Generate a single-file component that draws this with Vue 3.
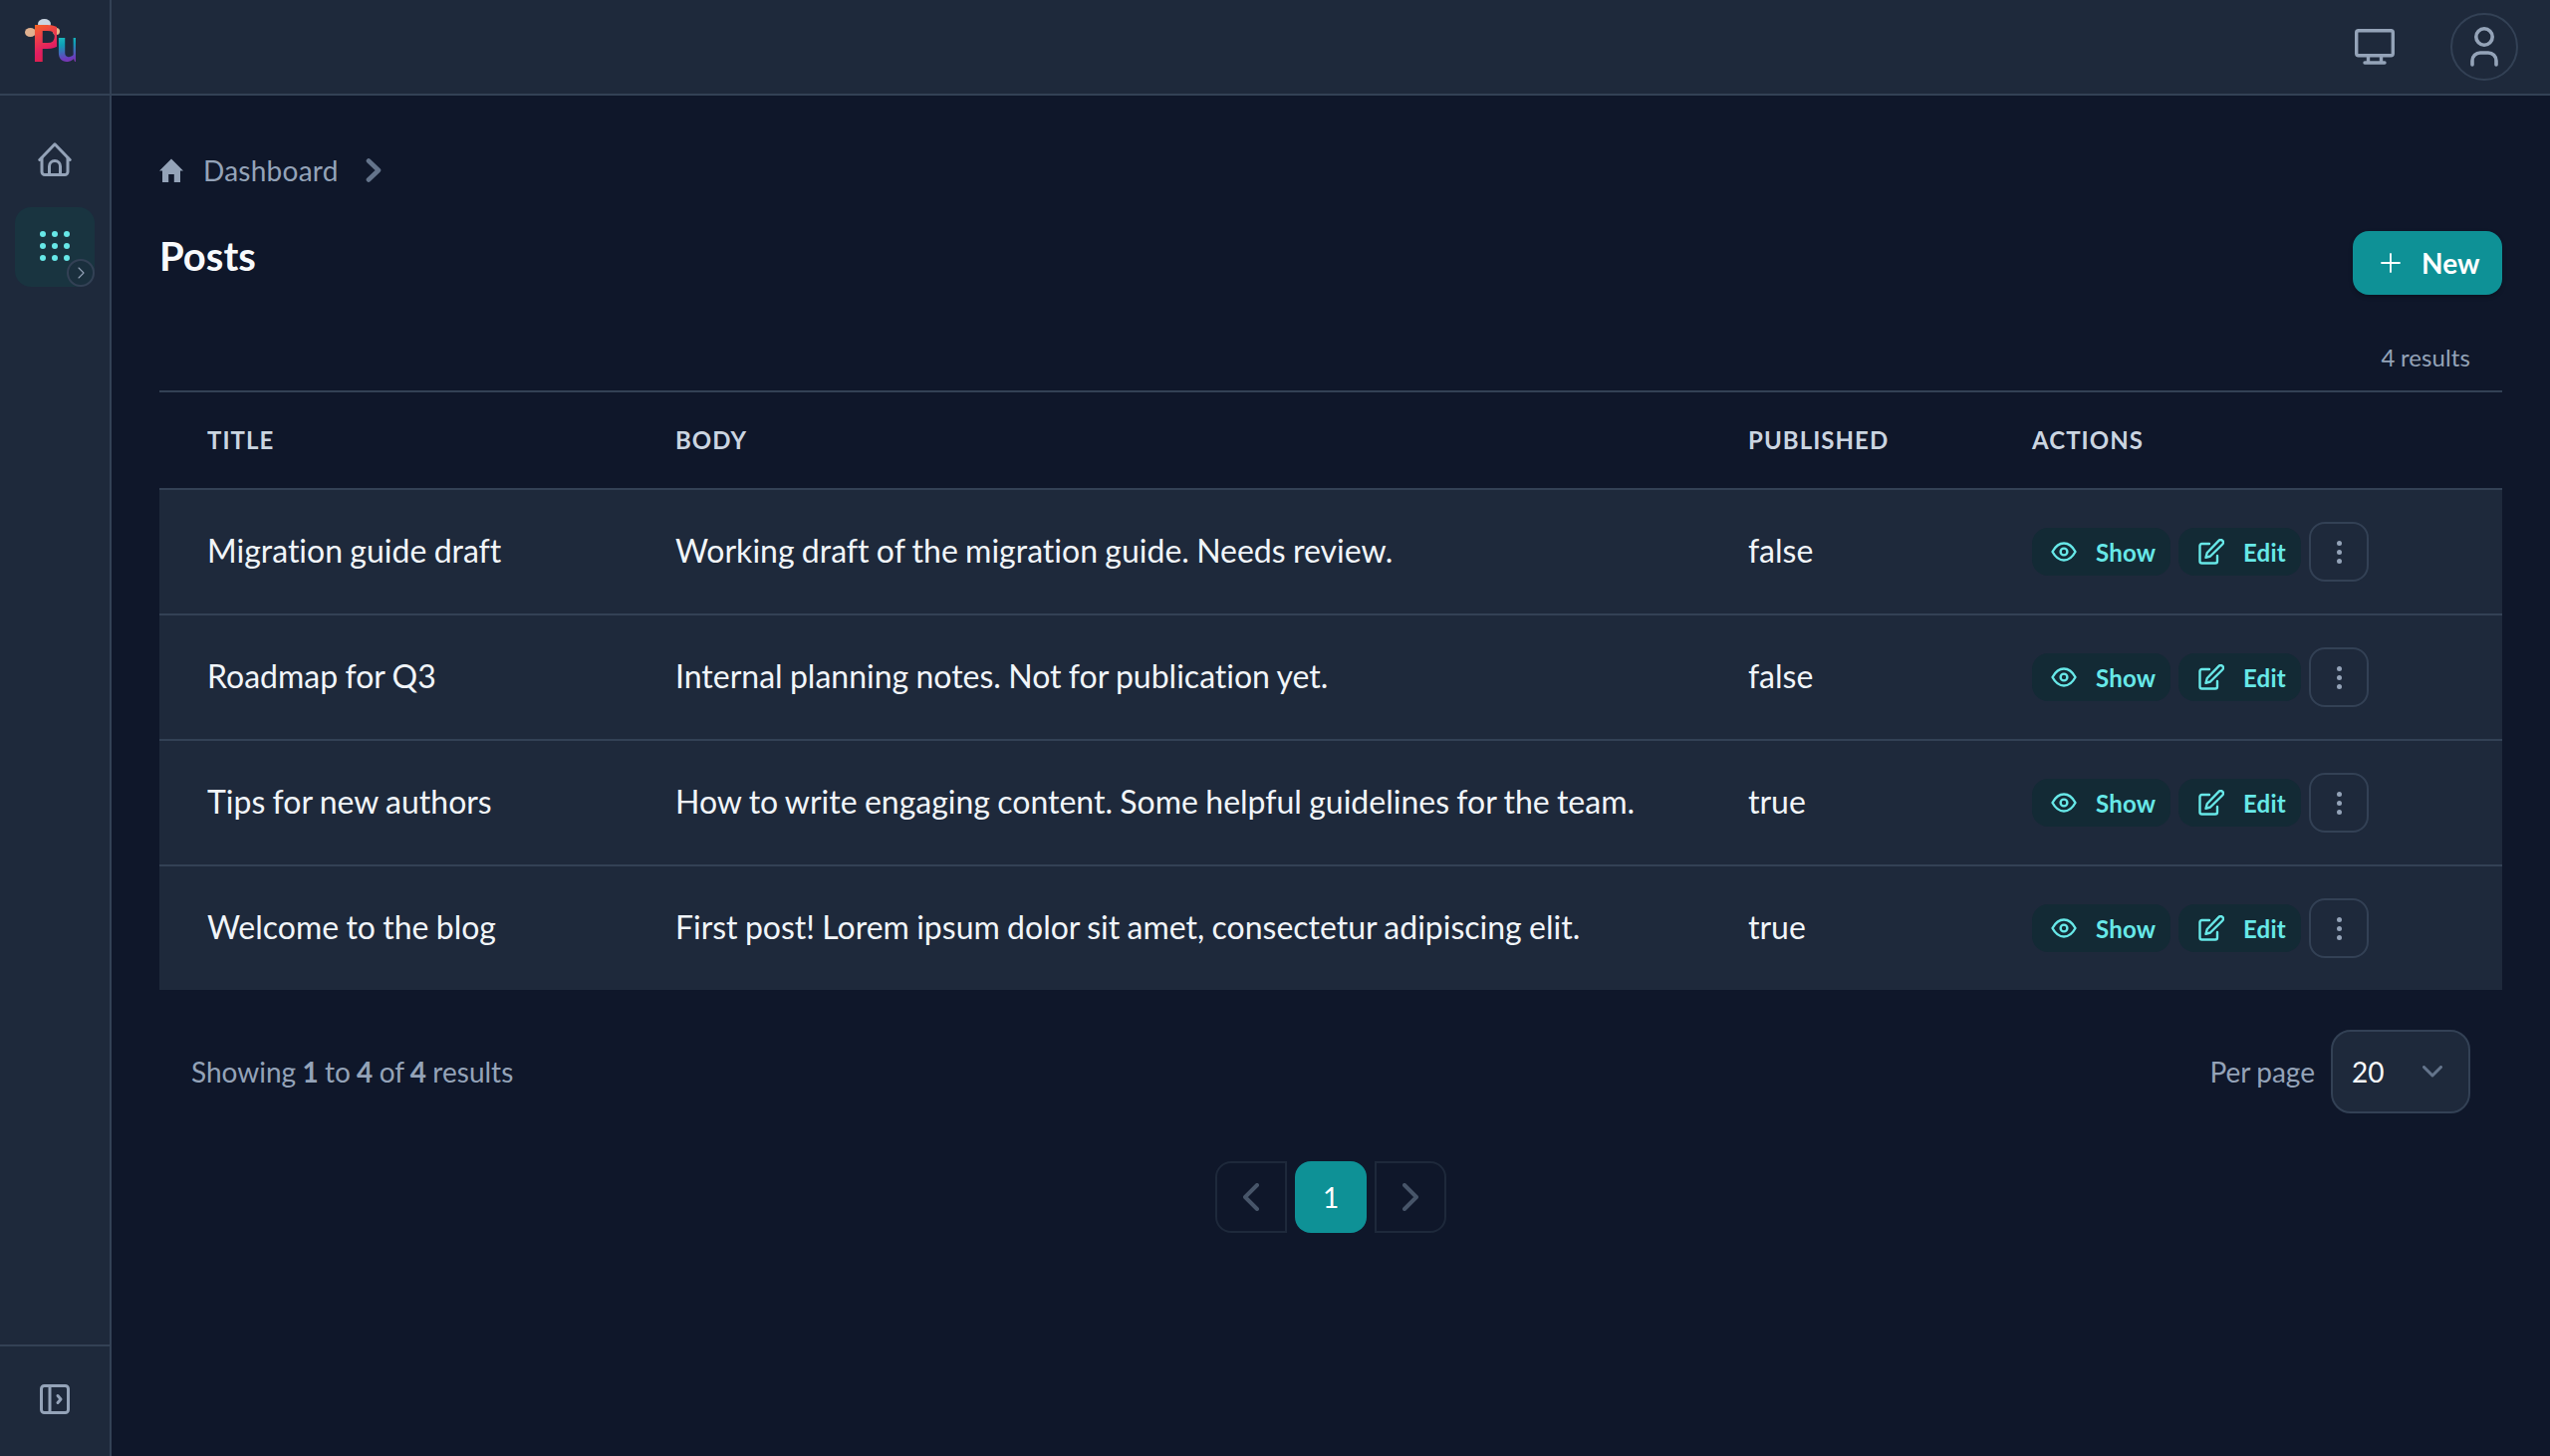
<script setup>
const rows = [
  { title: 'Migration guide draft', body: 'Working draft of the migration guide. Needs review.', published: 'false' },
  { title: 'Roadmap for Q3', body: 'Internal planning notes. Not for publication yet.', published: 'false' },
  { title: 'Tips for new authors', body: 'How to write engaging content. Some helpful guidelines for the team.', published: 'true' },
  { title: 'Welcome to the blog', body: 'First post! Lorem ipsum dolor sit amet, consectetur adipiscing elit.', published: 'true' },
]
const dots = Array.from({ length: 9 }, (_, i) => i)
</script>

<template>
  <div class="app">
    <aside class="sidebar">
      <div class="logo-cell">
        <div class="logo">
          <span class="logo-splash s1"></span>
          <span class="logo-splash s2"></span>
          <span class="logo-splash s3"></span>
          <span class="logo-p">P</span><span class="logo-u">u</span>
        </div>
      </div>
      <nav class="nav">
        <svg class="nav-home" viewBox="0 0 34 34" fill="none" stroke="#94a3b8" stroke-width="3" stroke-linecap="round" stroke-linejoin="round">
          <path d="M1.8 17.5 L17 1.8 L32.2 17.5" />
          <path d="M4 15.5 V29.5 a3 3 0 0 0 3 3 H27 a3 3 0 0 0 3 -3 V15.5" />
          <path d="M11.5 32 V24 a5.5 5.5 0 0 1 11 0 V32" />
        </svg>
        <div class="nav-active">
          <div class="dot-grid">
            <span v-for="d in dots" :key="d" class="dot"></span>
          </div>
          <span class="nav-badge">
            <svg viewBox="0 0 12 12" fill="none" stroke="#94a3b8" stroke-width="1.1" stroke-linecap="round" stroke-linejoin="round"><path d="M4 1 L9 6 L4 11" /></svg>
          </span>
        </div>
      </nav>
      <div class="side-foot">
        <svg viewBox="0 0 30 30" fill="none" stroke="#94a3b8" stroke-width="3" stroke-linejoin="round" stroke-linecap="round">
          <rect x="1.5" y="1.5" width="27" height="27" rx="3" />
          <path d="M10 1.5 V28.5" />
          <path d="M18 11.5 L21 15 L18 18.5" />
        </svg>
      </div>
    </aside>

    <div class="main">
      <header class="topbar">
        <svg class="monitor" viewBox="0 0 40 36" fill="none" stroke="#94a3b8" stroke-width="3.4" stroke-linecap="round" stroke-linejoin="round">
          <rect x="1.7" y="1.7" width="36.6" height="25" rx="2" />
          <path d="M13.5 27 V34 M26.5 27 V34 M10 34 H30" />
        </svg>
        <div class="avatar">
          <svg viewBox="0 0 30 40" fill="none" stroke="#94a3b8" stroke-width="3.6" stroke-linecap="round">
            <circle cx="15" cy="10" r="8.2" />
            <path d="M3 38 V34 a8 8 0 0 1 8 -8 H19 a8 8 0 0 1 8 8 V38" />
          </svg>
        </div>
      </header>

      <main class="content">
        <div class="crumbs">
          <svg class="crumb-home" viewBox="0 0 24 24" fill="#94a3b8"><path d="M12 0.6 L24 12.5 H21 V24 H14.8 V16 H9.2 V24 H3 V12.5 H0 Z" /></svg>
          <span class="crumb-text">Dashboard</span>
          <svg class="crumb-chev" viewBox="0 0 16 24" fill="none" stroke="#64748b" stroke-width="4.6" stroke-linecap="round" stroke-linejoin="round"><path d="M3 2.5 L13 12 L3 21.5" /></svg>
        </div>

        <div class="title-row">
          <h1>Posts</h1>
          <button class="new-btn">
            <svg viewBox="0 0 20 20" fill="none" stroke="#fff" stroke-width="1.8" stroke-linecap="round"><path d="M10 1 V19 M1 10 H19" /></svg>
            <span>New</span>
          </button>
        </div>

        <div class="count">4 results</div>

        <div class="table">
          <div class="row head">
            <div class="cell">Title</div>
            <div class="cell">Body</div>
            <div class="cell">Published</div>
            <div class="cell">Actions</div>
          </div>
          <div v-for="r in rows" :key="r.title" class="row item">
            <div class="cell text">{{ r.title }}</div>
            <div class="cell text">{{ r.body }}</div>
            <div class="cell text">{{ r.published }}</div>
            <div class="cell actions">
              <span class="pill show">
                <svg viewBox="0 0 26 20" fill="none" stroke="#67e8e8" stroke-width="2.4" stroke-linecap="round" stroke-linejoin="round">
                  <path d="M1.5 10 C5 3.5 9 1.5 13 1.5 S21 3.5 24.5 10 C21 16.5 17 18.5 13 18.5 S5 16.5 1.5 10 Z" />
                  <circle cx="13" cy="10" r="3.4" />
                </svg>
                <span>Show</span>
              </span>
              <span class="pill edit">
                <svg viewBox="0 0 26 26" fill="none" stroke="#67e8e8" stroke-width="2.4" stroke-linecap="round" stroke-linejoin="round">
                  <path d="M11 5 H3.5 A2 2 0 0 0 1.5 7 V22.5 A2 2 0 0 0 3.5 24.5 H17 A2 2 0 0 0 19 22.5 V17" />
                  <path d="M20.5 1.8 a2.6 2.6 0 0 1 3.7 3.7 L12 17.5 L7.5 18.8 L8.8 14 Z" />
                </svg>
                <span>Edit</span>
              </span>
              <span class="more">
                <i></i><i></i><i></i>
              </span>
            </div>
          </div>
        </div>

        <div class="table-foot">
          <div class="showing">Showing <b>1</b> to <b>4</b> of <b>4</b> results</div>
          <div class="per-page">
            <span>Per page</span>
            <div class="select">
              <span>20</span>
              <svg viewBox="0 0 20 12" fill="none" stroke="#64748b" stroke-width="3" stroke-linecap="round" stroke-linejoin="round"><path d="M1.5 1.5 L10 10 L18.5 1.5" /></svg>
            </div>
          </div>
        </div>

        <div class="pager">
          <span class="pg prev">
            <svg viewBox="0 0 16 28" fill="none" stroke="#475569" stroke-width="4" stroke-linecap="round" stroke-linejoin="round"><path d="M14 2 L2 14 L14 26" /></svg>
          </span>
          <span class="pg current">1</span>
          <span class="pg next">
            <svg viewBox="0 0 16 28" fill="none" stroke="#475569" stroke-width="4" stroke-linecap="round" stroke-linejoin="round"><path d="M2 2 L14 14 L2 26" /></svg>
          </span>
        </div>
      </main>
    </div>
  </div>
</template>

<style>
html, body { margin: 0; background: #0f172a; }
</style>

<style scoped>
.app {
  display: flex;
  height: 1462px;
  overflow: hidden;
  background: #0f172a;
  color: #f1f5f9;
  font-family: Lato, "Noto Sans", sans-serif;
  font-variant-ligatures: none;
  word-spacing: -0.055em;
}
.sidebar {
  width: 112px;
  flex: none;
  box-sizing: border-box;
  display: flex;
  flex-direction: column;
  background: #1e293b;
  border-right: 2px solid #334155;
}
.logo-cell {
  height: 96px;
  flex: none;
  box-sizing: border-box;
  border-bottom: 2px solid #334155;
}
.logo {
  position: relative;
  width: 66px;
  height: 66px;
  margin: 0 0 0 31px;
  font-size: 52px;
  font-weight: 900;
  line-height: 84px;
  letter-spacing: -7px;
  white-space: nowrap;
  filter: blur(0.5px);
}
.logo-p {
  position: relative;
  background: linear-gradient(155deg, #f97316 14%, #ef4444 38%, #e11d62 62%, #dc2626 100%);
  -webkit-background-clip: text;
  background-clip: text;
  color: transparent;
}
.logo-u {
  position: relative;
  font-size: 46px;
  background: linear-gradient(170deg, #22c7c2 30%, #0e9fb5 50%, #6d3bbd 75%, #a8256f 100%);
  -webkit-background-clip: text;
  background-clip: text;
  color: transparent;
}
.logo-splash { position: absolute; border-radius: 50%; }
.s1 { left: 7px; top: 19px; width: 13px; height: 10px; background: #cbd5e1; }
.s2 { left: -6px; top: 28px; width: 11px; height: 9px; background: #e0b08f; }
.s3 { left: 22px; top: 28px; width: 7px; height: 7px; background: #eab68b; }

.nav {
  flex: 1;
  display: flex;
  flex-direction: column;
  align-items: center;
  padding-top: 47px;
}
.nav-home { width: 34px; height: 34px; display: block; }
.nav-active {
  position: relative;
  margin-top: 31px;
  width: 80px;
  height: 80px;
  border-radius: 16px;
  background: #193440;
  display: flex;
  align-items: center;
  justify-content: center;
}
.dot-grid {
  display: grid;
  grid-template-columns: repeat(3, 6px);
  gap: 6px;
  margin-top: -2px;
}
.dot { width: 6px; height: 6px; border-radius: 50%; background: #67e8e8; }
.nav-badge {
  position: absolute;
  right: 0;
  bottom: 0;
  width: 28px;
  height: 28px;
  box-sizing: border-box;
  border: 2px solid #334155;
  border-radius: 50%;
  background: #1a2f3d;
  display: flex;
  align-items: center;
  justify-content: center;
}
.nav-badge svg { width: 12px; height: 12px; }
.side-foot {
  height: 112px;
  box-sizing: border-box;
  flex: none;
  border-top: 2px solid #334155;
  display: flex;
  align-items: center;
  justify-content: center;
  padding-bottom: 4px;
}
.side-foot svg { width: 30px; height: 30px; }

.main {
  flex: 1;
  min-width: 0;
  display: flex;
  flex-direction: column;
}
.topbar {
  height: 96px;
  flex: none;
  box-sizing: border-box;
  background: #1e293b;
  border-bottom: 2px solid #334155;
  display: flex;
  align-items: center;
  justify-content: flex-end;
  padding-right: 32px;
}
.monitor { width: 40px; height: 36px; margin-right: 56px; }
.avatar {
  width: 68px;
  height: 68px;
  box-sizing: border-box;
  border: 2px solid #334155;
  border-radius: 50%;
  display: flex;
  align-items: center;
  justify-content: center;
}
.avatar svg { width: 30px; height: 40px; }

.content {
  flex: 1;
  padding: 58px 48px 0 48px;
  box-sizing: border-box;
}
.crumbs {
  display: flex;
  align-items: center;
  height: 34px;
}
.crumb-home { width: 24px; height: 24px; }
.crumb-text {
  margin-left: 20px;
  font-size: 28px;
  letter-spacing: 0.25px;
  color: #94a3b8;
}
.crumb-chev { width: 16px; height: 24px; margin-left: 27px; }
.title-row {
  display: flex;
  justify-content: space-between;
  align-items: flex-start;
  margin-top: 44px;
  height: 64px;
}
h1 {
  margin: 3px 0 0;
  font-size: 40px;
  line-height: 44px;
  font-weight: 700;
  color: #f8fafc;
}
.new-btn {
  width: 150px;
  height: 64px;
  padding: 0 0 0 28px;
  border: 0;
  border-radius: 16px;
  background: #0e9196;
  color: #fff;
  font-family: inherit;
  font-size: 28px;
  font-weight: 700;
  display: flex;
  align-items: center;
  gap: 21px;
  box-shadow: 0 2px 4px rgba(0, 0, 0, 0.25);
}
.new-btn svg { width: 20px; height: 20px; }
.count {
  margin-top: 32px;
  height: 64px;
  padding-right: 32px;
  text-align: right;
  box-sizing: border-box;
  font-size: 24px;
  line-height: 62px;
  letter-spacing: 0.1px;
  color: #94a3b8;
}
.table { border-top: 2px solid #334155; }
.row {
  display: grid;
  grid-template-columns: 470px 1077px 285px 1fr;
  align-items: center;
  box-sizing: border-box;
}
.cell { padding-left: 48px; white-space: nowrap; }
.head {
  height: 98px;
  padding-bottom: 2px;
  font-size: 24px;
  font-weight: 700;
  letter-spacing: 1.05px;
  text-transform: uppercase;
  color: #cbd5e1;
  border-bottom: 2px solid #334155;
}
.item {
  height: 126px;
  background: #1e293b;
  font-size: 32px;
  color: #f1f5f9;
  border-bottom: 2px solid #334155;
}
.item:last-child { border-bottom: 0; height: 124px; }
.text { padding-bottom: 3px; }
.actions {
  display: flex;
  align-items: center;
  gap: 8px;
}
.pill {
  height: 48px;
  box-sizing: border-box;
  border-radius: 16px;
  background: #132a35;
  color: #67e8e8;
  font-size: 24px;
  font-weight: 700;
  letter-spacing: 0.2px;
  display: flex;
  align-items: center;
  gap: 19px;
}
.show { width: 139px; padding-left: 19px; }
.edit { width: 123px; padding-left: 20px; }
.pill svg { width: 26px; height: 26px; }
.more {
  width: 60px;
  height: 60px;
  box-sizing: border-box;
  border: 2px solid #334155;
  border-radius: 16px;
  display: flex;
  flex-direction: column;
  align-items: center;
  justify-content: center;
  gap: 4px;
}
.more i { width: 5px; height: 5px; border-radius: 50%; background: #94a3b8; }
.table-foot {
  display: flex;
  justify-content: space-between;
  align-items: center;
  padding: 40px 32px 0;
  height: 84px;
  font-size: 28px;
  color: #94a3b8;
}
.showing b { font-weight: 700; }
.per-page {
  display: flex;
  align-items: center;
  gap: 16px;
}
.select {
  width: 140px;
  height: 84px;
  box-sizing: border-box;
  padding: 0 26px 0 19px;
  border: 2px solid #334155;
  border-radius: 20px;
  background: #1e293b;
  color: #f8fafc;
  display: flex;
  align-items: center;
  justify-content: space-between;
}
.select svg { width: 20px; height: 12px; }
.pager {
  display: flex;
  justify-content: center;
  gap: 8px;
  margin-top: 48px;
}
.pg {
  width: 72px;
  height: 72px;
  box-sizing: border-box;
  display: flex;
  align-items: center;
  justify-content: center;
  font-size: 28px;
}
.pg svg { width: 16px; height: 28px; }
.prev {
  border: 2px solid #1e293b;
  border-radius: 16px 0 0 16px;
}
.next {
  border: 2px solid #1e293b;
  border-radius: 0 16px 16px 0;
}
.current {
  background: #0e9196;
  color: #fff;
  border-radius: 16px;
}
</style>
